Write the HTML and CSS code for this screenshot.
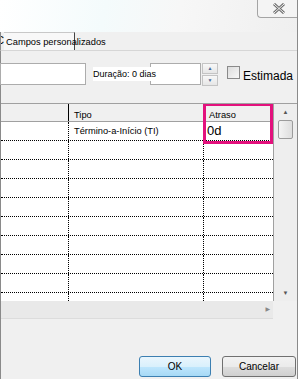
FILE: index.html
```html
<!DOCTYPE html>
<html lang="pt">

<head>
    <meta charset="UTF-8">
    <title>Informações da tarefa</title>
    <link rel="stylesheet" href="styles.css">
</head>

<body>
    <div class="window">
        <div class="titlebar">
            <div class="close">
                <svg width="14" height="11" viewBox="0 0 14 11">
                    <path d="M2 1 L12 10 M12 1 L2 10" stroke="#6f6f6f" stroke-width="3" fill="none"/>
                    <path d="M2 1 L12 10 M12 1 L2 10" stroke="#f4f4f4" stroke-width="1" fill="none"/>
                </svg>
            </div>
        </div>

        <div class="tabs">
            <span class="tab-prev">C</span>
            <div class="tab">Campos personalizados</div>
        </div>

        <div class="content">
            <div class="form-row">
                <input type="text" class="name-input">
                <span class="label">Duração: 0 dias</span>
                <input type="text" class="dur-input">
                <div class="spin">
                    <div class="spin-btn">&#x25B2;</div>
                    <div class="spin-btn">&#x25BC;</div>
                </div>
                <label class="check"><span class="box"></span>Estimada</label>
            </div>

            <div class="grid-wrap">
                <div class="grid">
                    <div class="grid-main">
                        <div class="row head">
                            <div class="cell c1"></div>
                            <div class="cell c2">Tipo</div>
                            <div class="cell c3">Atraso</div>
                        </div>
                        <div class="row">
                            <div class="cell c1"></div>
                            <div class="cell c2">Término-a-Início (TI)</div>
                            <div class="cell c3 big">0d</div>
                        </div>
                        <div class="row"><div class="cell c1"></div><div class="cell c2"></div><div class="cell c3"></div></div>
                        <div class="row"><div class="cell c1"></div><div class="cell c2"></div><div class="cell c3"></div></div>
                        <div class="row"><div class="cell c1"></div><div class="cell c2"></div><div class="cell c3"></div></div>
                        <div class="row"><div class="cell c1"></div><div class="cell c2"></div><div class="cell c3"></div></div>
                        <div class="row"><div class="cell c1"></div><div class="cell c2"></div><div class="cell c3"></div></div>
                        <div class="row"><div class="cell c1"></div><div class="cell c2"></div><div class="cell c3"></div></div>
                        <div class="row"><div class="cell c1"></div><div class="cell c2"></div><div class="cell c3"></div></div>
                        <div class="row"><div class="cell c1"></div><div class="cell c2"></div><div class="cell c3"></div></div>
                        <div class="row last"><div class="cell c1"></div><div class="cell c2"></div><div class="cell c3"></div></div>
                        <div class="highlight"></div>
                    </div>
                    <div class="vscroll">
                        <div class="arrow">&#x25B2;</div>
                        <div class="thumb"></div>
                        <div class="track"></div>
                        <div class="arrow">&#x25BC;</div>
                    </div>
                </div>
                <div class="hscroll">
                    <div class="harrow">&#x25B6;</div>
                </div>
            </div>

            <div class="buttons">
                <button class="btn ok">OK</button>
                <button class="btn">Cancelar</button>
            </div>
        </div>
    </div>
</body>

</html>
```

FILE: styles.css
```css
body {
    margin: 0;
    font-family: "Liberation Sans", "DejaVu Sans", sans-serif;
    font-size: 9.3px;
    color: #000;
    background: #f0f0f0;
}

.window {
    width: 297px;
    height: 379px;
    border-right: 1px solid #8a8a8a;
    overflow: hidden;
    display: flex;
    flex-direction: column;
}

.titlebar {
    height: 32px;
    display: flex;
    justify-content: flex-end;
    align-items: flex-start;
    background: linear-gradient(100deg, #ffffff 0%, #f4fbfc 35%, #f7f7f7 60%, #efefef 100%);
}

.close {
    width: 40px;
    height: 18px;
    border-left: 1px solid #a4a4a4;
    border-bottom: 1px solid #a4a4a4;
    border-bottom-left-radius: 4px;
    background: #f4f4f4;
    display: flex;
    justify-content: center;
    align-items: center;
    padding-left: 2px;
    box-sizing: border-box;
}

.tabs {
    height: 19px;
    display: flex;
    border-bottom: 1px solid #d6d6d6;
    border-left: 1px solid #8a8a8a;
    box-sizing: border-box;
    font-size: 9.3px;
}

.tab-prev {
    width: 3px;
    overflow: hidden;
    line-height: 18px;
    direction: rtl;
    font-size: 10px;
}

.tab {
    width: 71px;
    height: 18px;
    box-sizing: border-box;
    border-top: 1px solid #c8c8c8;
    border-right: 1px solid #444;
    background: #f8f8f8;
    padding-left: 2px;
    line-height: 18px;
    white-space: nowrap;
    overflow: visible;
}

.content {
    flex: 1;
    border-left: 1px solid #8a8a8a;
    display: flex;
    flex-direction: column;
}

.form-row {
    display: flex;
    align-items: center;
    height: 22px;
    margin-top: 12px;
}

.name-input {
    width: 86px;
    height: 22px;
    box-sizing: border-box;
    margin: 0 0 0 -1px;
    border: 1px solid #acacac;
    background: #fff;
}

.label {
    position: relative;
    z-index: 1;
    margin-left: 7px;
    margin-right: -7px;
    background: #fff;
    font-size: 9px;
    padding: 2px 0;
    width: 64px;
    white-space: nowrap;
}

.dur-input {
    width: 51px;
    height: 22px;
    box-sizing: border-box;
    margin: 0;
    border: 1px solid #acacac;
    background: #fff;
}

.spin {
    margin-left: 1px;
    width: 16px;
    height: 22px;
    display: flex;
    flex-direction: column;
    gap: 1px;
}

.spin-btn {
    flex: 1;
    border: 1px solid #c4c4c4;
    background: linear-gradient(#f8f8f8, #e6e6e6);
    font-size: 5px;
    color: #4a6a9a;
    text-align: center;
    line-height: 9px;
}

.check {
    display: flex;
    align-items: center;
    margin-left: 9px;
    font-size: 12px;
    padding-top: 3px;
    white-space: nowrap;
}

.box {
    width: 11px;
    height: 11px;
    border: 1px solid #8a8a8a;
    background: linear-gradient(135deg, #dcdcdc, #f8f8f8);
    margin-right: 3px;
    margin-top: -6px;
}

.grid-wrap {
    margin-top: 18px;
}

.grid {
    display: flex;
    height: 197px;
    border-top: 1px solid #a0a0a0;
}

.grid-main {
    position: relative;
    width: 272px;
    overflow: hidden;
    background: #fff;
    border-right: 1px solid #a0a0a0;
}

.row {
    display: flex;
    height: 18px;
    border-bottom: 1px dotted #000;
}

.row.head {
    height: 17px;
    background: #f0f0f0;
    border-bottom: 1px solid #a0a0a0;
}

.cell {
    box-sizing: border-box;
    padding-left: 5px;
    line-height: 18px;
    white-space: nowrap;
}

.head .cell {
    padding-top: 2px;
}

.c1 {
    width: 68px;
    border-right: 1px dotted #000;
}

.head .c1 {
    border-right: 1px solid #000;
}

.c2 {
    width: 135px;
    border-right: 1px dotted #000;
}

.head .c2 {
    border-right: none;
}

.c3 {
    flex: 1;
}

.c3.big {
    font-size: 13px;
    padding-left: 3px;
}

.highlight {
    position: absolute;
    left: 202px;
    top: -1px;
    width: 70px;
    height: 41px;
    box-sizing: border-box;
    border: 3px solid #e3117d;
}

.vscroll {
    flex: 1;
    display: flex;
    flex-direction: column;
    align-items: center;
    background: #eeeeee;
}

.arrow {
    font-size: 6px;
    color: #555;
    height: 16px;
    line-height: 16px;
}

.thumb {
    width: 13px;
    height: 17px;
    border: 1px solid #9c9c9c;
    border-radius: 2px;
    background: linear-gradient(90deg, #f4f4f4, #dedede);
}

.track {
    flex: 1;
}

.hscroll {
    height: 17px;
    width: 272px;
    background: #e9e9e9;
    border-bottom: 1px solid #dcdcdc;
    display: flex;
    justify-content: flex-end;
}

.harrow {
    font-size: 6px;
    color: #888;
    line-height: 17px;
    padding-right: 3px;
}

.buttons {
    display: flex;
    justify-content: flex-end;
    gap: 11px;
    margin-top: 37px;
    padding-right: 1px;
}

.btn {
    width: 74px;
    height: 21px;
    border: 1px solid #707070;
    border-radius: 3px;
    background: linear-gradient(#f2f2f2 0%, #ebebeb 50%, #dddddd 51%, #cfcfcf 100%);
    font-family: "Liberation Sans", "DejaVu Sans", sans-serif;
    font-size: 10px;
    padding: 0;
}

.btn.ok {
    width: 72px;
    border-color: #3c7fb1;
    background: linear-gradient(#eaf6fd 0%, #d9f0fc 50%, #bee6fd 51%, #a7d9f5 100%);
}
```
